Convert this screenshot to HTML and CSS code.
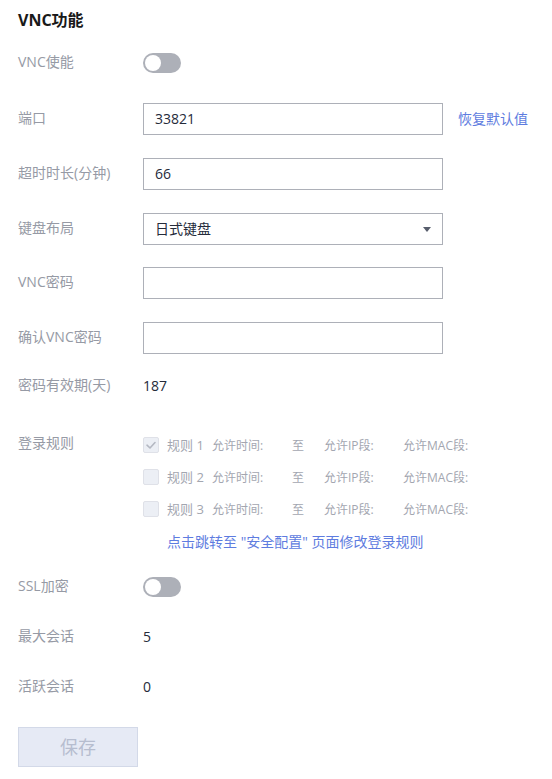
FILE: index.html
```html
<!DOCTYPE html>
<html lang="zh-CN">
<head>
<meta charset="utf-8">
<title>VNC功能</title>
<link rel="stylesheet" href="styles.css">
</head>
<body>
<div class="page">
  <h1 class="title">VNC功能</h1>

  <div class="row row-vnc">
    <div class="label">VNC使能</div>
    <div class="switch"><span class="knob"></span></div>
  </div>

  <div class="row row-field r-port">
    <div class="label">端口</div>
    <div class="input">33821</div>
    <a class="link reset">恢复默认值</a>
  </div>

  <div class="row row-field r-gap">
    <div class="label">超时时长(分钟)</div>
    <div class="input">66</div>
  </div>

  <div class="row row-field r-gap">
    <div class="label">键盘布局</div>
    <div class="input select">日式键盘<span class="caret"></span></div>
  </div>

  <div class="row row-field r-gap2">
    <div class="label">VNC密码</div>
    <div class="input"></div>
  </div>

  <div class="row row-field r-gap">
    <div class="label">确认VNC密码</div>
    <div class="input"></div>
  </div>

  <div class="row r-expire">
    <div class="label">密码有效期(天)</div>
    <div class="value">187</div>
  </div>

  <div class="rules-row">
    <div class="label rules-label">登录规则</div>
    <div class="rules">
      <div class="rule">
        <span class="check checked"><svg viewBox="0 0 16 16" width="16" height="16"><path d="M4 8.2 L7 11 L12 5.5" fill="none" stroke="#b4b8c2" stroke-width="1.6" stroke-linecap="round" stroke-linejoin="round"/></svg></span>
        <span class="rname">规则 1</span>
        <span class="rtime">允许时间:</span>
        <span class="rto">至</span>
        <span class="rip">允许IP段:</span>
        <span class="rmac">允许MAC段:</span>
      </div>
      <div class="rule">
        <span class="check"></span>
        <span class="rname">规则 2</span>
        <span class="rtime">允许时间:</span>
        <span class="rto">至</span>
        <span class="rip">允许IP段:</span>
        <span class="rmac">允许MAC段:</span>
      </div>
      <div class="rule">
        <span class="check"></span>
        <span class="rname">规则 3</span>
        <span class="rtime">允许时间:</span>
        <span class="rto">至</span>
        <span class="rip">允许IP段:</span>
        <span class="rmac">允许MAC段:</span>
      </div>
      <a class="link jump">点击跳转至 "安全配置" 页面修改登录规则</a>
    </div>
  </div>

  <div class="row r-ssl">
    <div class="label">SSL加密</div>
    <div class="switch"><span class="knob"></span></div>
  </div>

  <div class="row r-sess">
    <div class="label">最大会话</div>
    <div class="value">5</div>
  </div>

  <div class="row r-sess">
    <div class="label">活跃会话</div>
    <div class="value">0</div>
  </div>

  <button class="save" disabled>保存</button>
</div>
</body>
</html>
```

FILE: styles.css
```css
* { box-sizing: border-box; }
html, body {
  margin: 0;
  padding: 0;
  background: #ffffff;
}
body {
  font-family: "Open Sans", "Noto Sans CJK SC", sans-serif;
  font-size: 14px;
  color: #252b3a;
}
.page {
  padding: 8px 18px 0 18px;
}
.title {
  margin: 0;
  font-size: 16px;
  font-weight: 700;
  line-height: 24px;
  color: #191919;
  padding-bottom: 1px;
}
.row {
  display: flex;
  align-items: center;
  height: 32px;
}
.label {
  width: 125px;
  flex: none;
  color: #969aa5;
  font-size: 14px;
  line-height: 20px;
  padding-bottom: 2px;
}
.row-vnc { margin-top: 14px; }
.r-port { margin-top: 24px; }
.r-gap { margin-top: 23px; }
.r-gap2 { margin-top: 22px; }
.r-expire { margin-top: 16px; }
.r-ssl { margin-top: 10px; }
.r-sess { margin-top: 18px; }

.switch {
  width: 38px;
  height: 20px;
  border-radius: 10px;
  background: #adb0b8;
  display: flex;
  align-items: center;
  padding-left: 2px;
}
.knob {
  width: 16px;
  height: 16px;
  border-radius: 50%;
  background: #ffffff;
}
.input {
  width: 300px;
  height: 32px;
  border: 1px solid #adb0b8;
  padding: 0 11px 2px 11px;
  display: flex;
  align-items: center;
  color: #252b3a;
  font-size: 14px;
}
.select {
  justify-content: space-between;
}
.caret {
  width: 0;
  height: 0;
  border-left: 4px solid transparent;
  border-right: 4px solid transparent;
  border-top: 5px solid #575d6c;
  margin-top: 2px;
}
.link {
  color: #5e7ce0;
  font-size: 14px;
  cursor: pointer;
}
.reset { margin-left: 15px; padding-bottom: 2px; }
.value {
  color: #252b3a;
  font-size: 14px;
  padding-bottom: 2px;
}
.rules-row {
  display: flex;
  align-items: flex-start;
  margin-top: 27px;
}
.rules-label {
  line-height: 28px;
}
.rules {
  display: flex;
  flex-direction: column;
}
.rule {
  display: flex;
  align-items: center;
  height: 32px;
  font-size: 12px;
  color: #a3a6b0;
}
.rule span:not(.check) { padding-bottom: 1px; }
.check {
  width: 16px;
  height: 16px;
  flex: none;
  border: 1px solid #dfe1e8;
  border-radius: 2px;
  background: #eceff5;
  display: flex;
  align-items: center;
  justify-content: center;
  margin-right: 8px;
}
.check svg { display: block; margin: -1px; }
.rname { width: 45px; font-size: 13px; }
.rtime { width: 80px; }
.rto { width: 32px; }
.rip { width: 79px; }
.jump {
  line-height: 34px;
  height: 36px;
  margin-left: 24px;
  font-size: 14px;
}
.save {
  margin-top: 24px;
  width: 120px;
  height: 40px;
  background: #e6eaf5;
  border: 1px solid #d3d9e8;
  color: #b6bdcf;
  font-family: "Noto Sans CJK SC", sans-serif;
  font-size: 18px;
  line-height: 36px;
  padding: 0 0 2px 0;
  border-radius: 0;
}
```
